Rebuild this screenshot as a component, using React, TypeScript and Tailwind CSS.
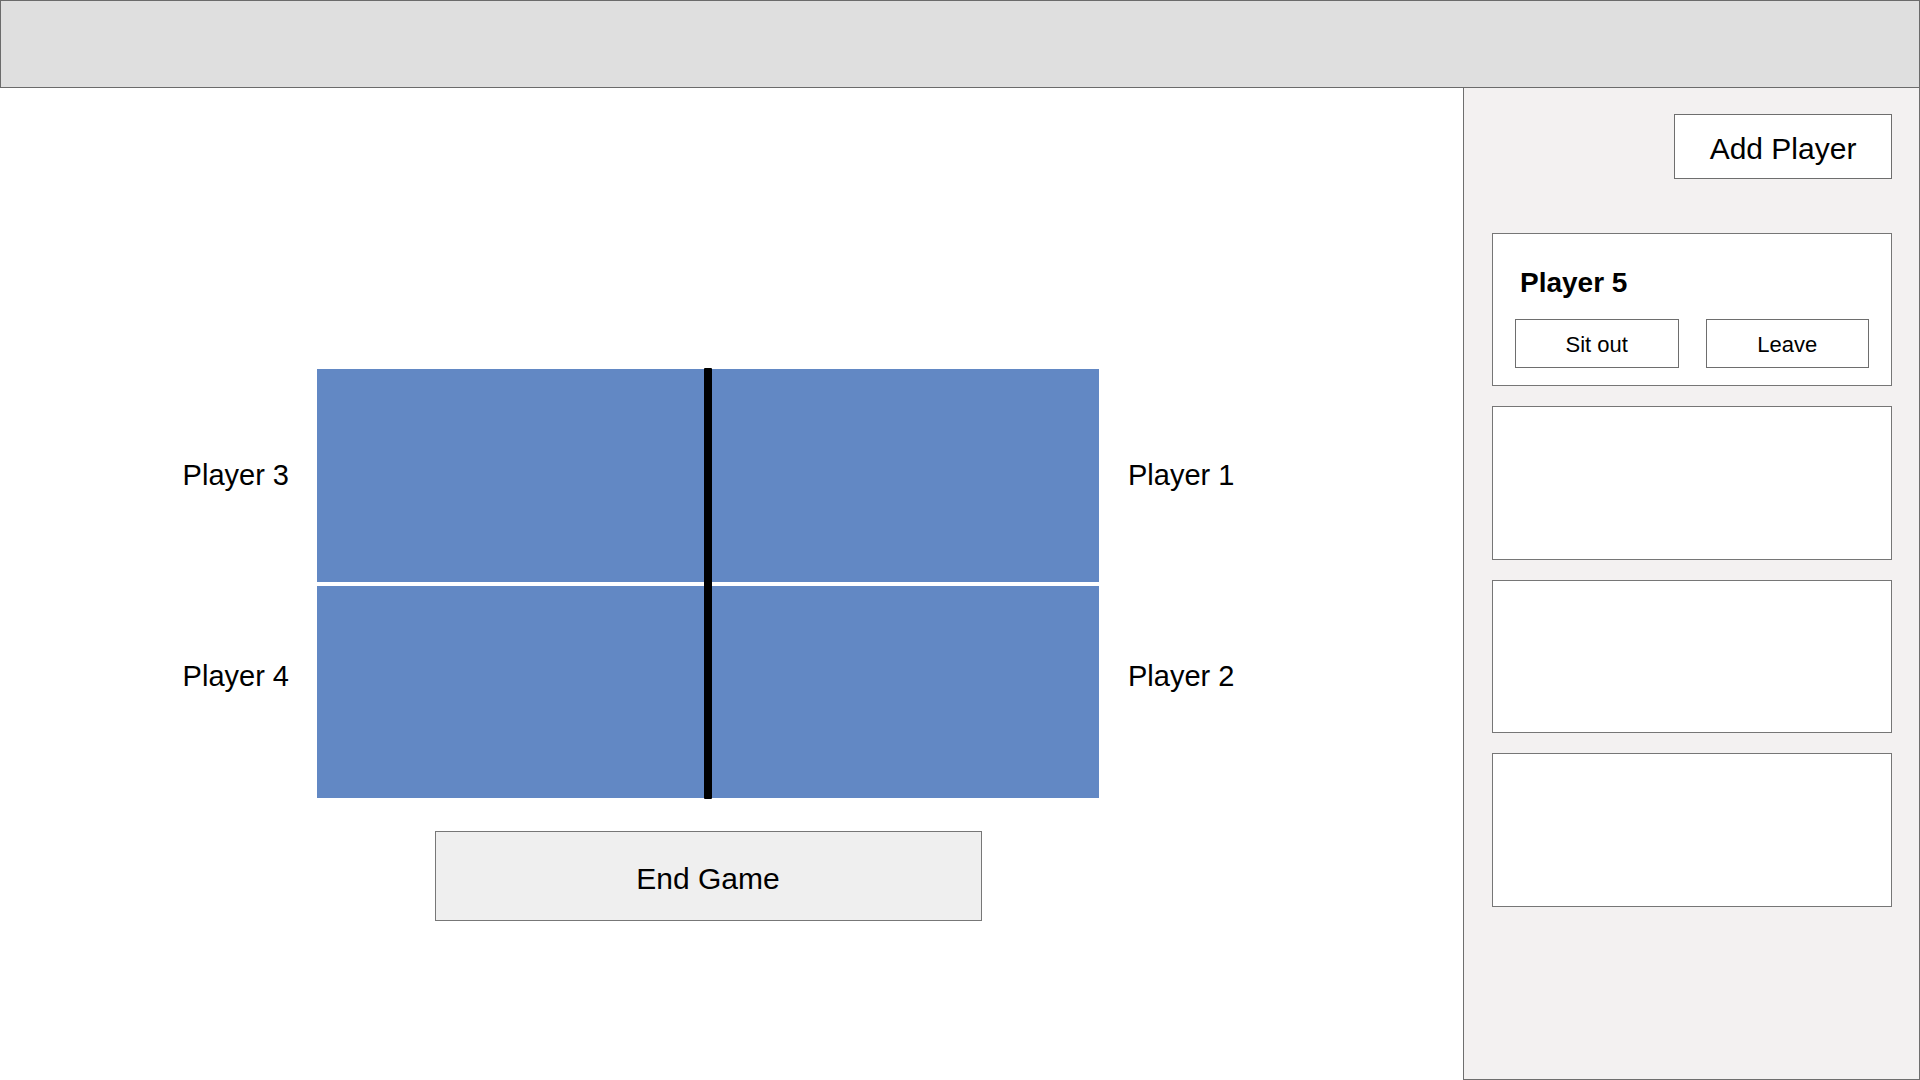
import React from "react";

const font = { fontFamily: '"Liberation Sans", Arial, Helvetica, sans-serif' };

function PlayerCard({ name, tall }: { name?: string; tall?: boolean }) {
  return (
    <div className={`${tall ? "h-[154px]" : "h-[153px]"} w-[400px] border border-[#767676] bg-white`}>
      {name && (
        <div className="pt-[32px] px-[22px]">
          <div className="ml-[5px] text-[28px] leading-[34px] font-bold text-black">{name}</div>
          <div className="mt-[19px] flex gap-[27px]">
            <button className="h-[49px] w-[164px] border border-[#6e6e6e] bg-white pt-[2px] text-[22px] text-black">
              Sit out
            </button>
            <button className="h-[49px] w-[164px] border border-[#6e6e6e] bg-white pt-[2px] text-[22px] text-black">
              Leave
            </button>
          </div>
        </div>
      )}
    </div>
  );
}

function Court() {
  return (
    <div className="relative flex w-[782px] flex-col gap-[4px]">
      <div className="h-[213px] bg-[#6288c4]" />
      <div className="h-[212px] bg-[#6288c4]" />
      {/* net */}
      <div className="absolute left-[387px] top-[-1px] bottom-[-1px] w-[8px] rounded-[1px] bg-black" />
    </div>
  );
}

export default function App() {
  return (
    <div className="flex h-screen w-full flex-col overflow-hidden bg-white" style={font}>
      <header className="h-[88px] shrink-0 border border-[#6b6b6b] bg-[#dfdfdf]" />

      <div className="flex flex-1 min-h-0">
        <main className="flex-1 pl-[153px] pt-[281px]">
          <div className="flex items-start">
            <div className="flex w-[136px] flex-col items-end gap-[167px] pt-[89px] text-[29px] leading-[34px] text-black">
              <span>Player 3</span>
              <span>Player 4</span>
            </div>

            <div className="ml-[28px] flex flex-col items-center">
              <Court />
              <button className="mt-[33px] h-[90px] w-[547px] border border-[#777777] bg-[#efefef] pt-[4px] text-[30px] text-black">
                End Game
              </button>
            </div>

            <div className="ml-[29px] flex flex-col gap-[167px] pt-[89px] text-[29px] leading-[34px] text-black">
              <span>Player 1</span>
              <span>Player 2</span>
            </div>
          </div>
        </main>

        <aside className="w-[457px] shrink-0 border-x border-b border-[#6e6e6e] bg-[#f3f1f1] pt-[26px] pl-[28px] pr-[27px]">
          <div className="flex justify-end">
            <button className="h-[65px] w-[218px] border border-[#6e6e6e] bg-white pt-[3px] text-[30px] text-black">
              Add Player
            </button>
          </div>
          <div className="mt-[54px] flex flex-col gap-[20px]">
            <PlayerCard name="Player 5" />
            <PlayerCard tall />
            <PlayerCard />
            <PlayerCard tall />
          </div>
        </aside>
      </div>
    </div>
  );
}
